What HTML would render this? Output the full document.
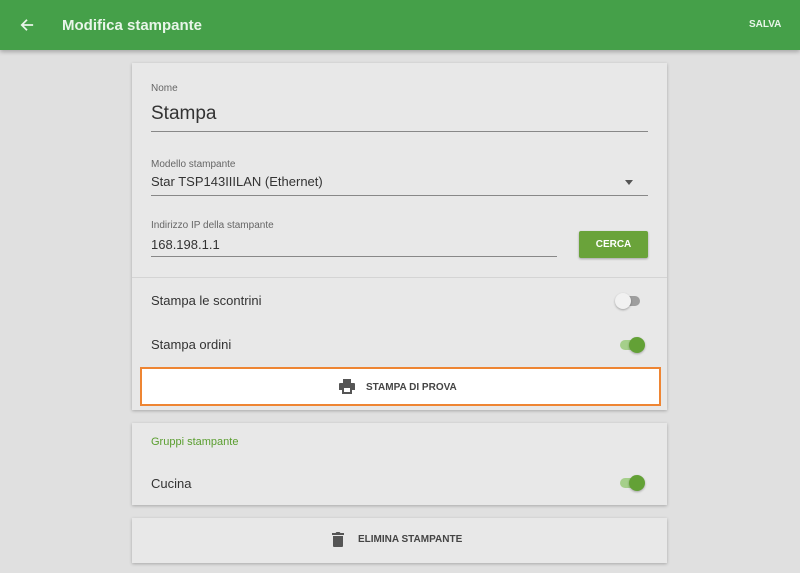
<!DOCTYPE html><html><head><style>
body{margin:0;width:800px;height:573px;background:#e0e0e0;font-family:"Liberation Sans",sans-serif;position:relative;overflow:hidden;color:#333}
.hdr{position:absolute;left:0;top:0;width:800px;height:50px;background:#45a049;box-shadow:0 2px 4px rgba(0,0,0,.25)}
.a{position:absolute}
.card{position:absolute;left:132px;width:535px;background:#e8e8e8;box-shadow:0 1px 3px rgba(0,0,0,.25)}
.lbl{font-size:10px;color:#666}
.line{position:absolute;height:1px;background:#888}
.tog{position:absolute;width:22px;height:10px;border-radius:5px}
.knob{position:absolute;width:16px;height:16px;border-radius:8px;top:-3px;box-shadow:0 1px 2px rgba(0,0,0,.3)}
</style></head><body>
<div class="hdr">
<svg class="a" style="left:20px;top:18px" width="14" height="14" viewBox="0 0 16 16"><path d="M15 8H2M8 2L2 8l6 6" stroke="#e8f5e9" stroke-width="2" fill="none"/></svg>
<div class="a" style="left:62px;top:17px;font-size:15px;font-weight:bold;color:#e8f5e9">Modifica stampante</div>
<div class="a" style="left:749px;top:19px;font-size:10px;font-weight:bold;color:#e8f5e9">SALVA</div>
</div>
<div class="card" style="top:63px;height:347px">
<div class="a lbl" style="left:19px;top:20px">Nome</div>
<div class="a" style="left:19px;top:40px;font-size:19px">Stampa</div>
<div class="line" style="left:19px;top:68px;width:497px"></div>
<div class="a lbl" style="left:19px;top:96px">Modello stampante</div>
<div class="a" style="left:19px;top:111px;font-size:13px">Star TSP143IIILAN (Ethernet)</div>
<div class="a" style="left:493px;top:117px;border:4px solid transparent;border-top:5px solid #555;width:0;height:0"></div>
<div class="line" style="left:19px;top:132px;width:497px"></div>
<div class="a lbl" style="left:19px;top:157px">Indirizzo IP della stampante</div>
<div class="a" style="left:19px;top:174px;font-size:13px">168.198.1.1</div>
<div class="line" style="left:19px;top:193px;width:406px"></div>
<div class="a" style="left:447px;top:168px;width:69px;height:27px;background:#6aa33a;color:#fff;font-size:10px;font-weight:bold;text-align:center;line-height:27px;border-radius:2px;box-shadow:0 1px 2px rgba(0,0,0,.3)">CERCA</div>
<div class="a" style="left:0;top:214px;width:535px;height:1px;background:#d4d4d4"></div>
<div class="a" style="left:19px;top:230px;font-size:13px">Stampa le scontrini</div>
<div class="tog" style="left:486px;top:233px;background:#9e9e9e"><div class="knob" style="left:-3px;background:#f1f1f1"></div></div>
<div class="a" style="left:19px;top:274px;font-size:13px">Stampa ordini</div>
<div class="tog" style="left:488px;top:277px;background:#a5cf8a"><div class="knob" style="left:9px;background:#63a136"></div></div>
<div class="a" style="left:8px;top:304px;width:517px;height:35px;background:#fff;border:2px solid #ee8533">
<svg class="a" style="left:197px;top:10px" width="16" height="15" viewBox="0 0 16 15"><path d="M4 0h8v4H4zM1 4h14a1 1 0 0 1 1 1v6h-3v4H3v-4H0V5a1 1 0 0 1 1-1z" fill="#555"/><rect x="5" y="9" width="6" height="4" fill="#fff"/></svg>
<div class="a" style="left:224px;top:13px;font-size:10px;font-weight:bold;color:#444">STAMPA DI PROVA</div>
</div>
</div>
<div class="card" style="top:423px;height:82px">
<div class="a" style="left:19px;top:13px;font-size:11px;color:#5a9e2f">Gruppi stampante</div>
<div class="a" style="left:19px;top:53px;font-size:13px">Cucina</div>
<div class="tog" style="left:488px;top:55px;background:#a5cf8a"><div class="knob" style="left:9px;background:#63a136"></div></div>
</div>
<div class="card" style="top:518px;height:45px">
<svg class="a" style="left:200px;top:14px" width="12" height="15" viewBox="0 0 12 15"><path d="M0 1h3.5l1-1h3l1 1H12v2H0zM1 4h10v10a1 1 0 0 1-1 1H2a1 1 0 0 1-1-1z" fill="#555"/></svg>
<div class="a" style="left:226px;top:16px;font-size:10px;font-weight:bold;color:#444">ELIMINA STAMPANTE</div>
</div>
</body></html>
